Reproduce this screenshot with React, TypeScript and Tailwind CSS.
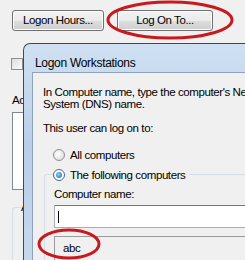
const btn =
  "h-[21px] rounded-[3px] border border-[#707070] bg-[linear-gradient(#f2f2f2_0%,#ebebeb_50%,#dddddd_51%,#cfcfcf_100%)] shadow-[inset_0_0_0_1px_#fcfcfc]";

export default function App() {
  return (
    <div className="relative w-[245px] h-[260px] overflow-hidden bg-[#f0f0f0] text-[11.5px] tracking-[-0.4px] text-black [font-family:'Liberation_Sans',Arial,sans-serif]">
      {/* window behind */}
      <div className="flex gap-[13px] pl-[12px] pt-[10px]">
        <button className={`${btn} w-[92px]`}>Logon Hours...</button>
        <button className={`${btn} w-[96px]`}>Log On To...</button>
      </div>

      <div className="ml-[11px] mt-[27px] w-[12px] h-[12px] border border-[#8f8f8f] bg-[linear-gradient(135deg,#dcdcdc,#fdfdfd)]" />

      <div className="ml-[12px] mt-[23px] leading-[14px]">Ac</div>
      <div className="ml-[12px] mt-[5px] w-[60px] h-[78px] border border-[#828790] bg-white" />
      <div className="ml-[12px] mt-[17px] w-[60px] h-[60px] rounded-tl-[3px] border-l border-t border-[#d5dfe5]">
        <div className="-mt-[7px] ml-[8px] w-fit bg-[#f0f0f0] leading-[12px]">A</div>
      </div>

      {/* dialog window */}
      <div className="absolute left-[23px] top-[43px] w-[240px] h-[230px] rounded-tl-[7px] border-l border-t border-[#3f4a58] bg-[linear-gradient(180deg,#cfe0f2,#b9cfe8_45%,#c6d9ee)] flex flex-col">
        <div className="h-[28px] shrink-0 flex items-center pl-[11px] pt-[10px] text-[12px] tracking-[-0.3px]">
          Logon Workstations
        </div>
        <div className="ml-[8px] flex-1 border-l border-t border-[#8ea4be] bg-[#f0f0f0] pl-[10px] pt-[13px] whitespace-nowrap leading-[12px]">
          <div>In Computer name, type the computer's Net</div>
          <div>System (DNS) name.</div>
          <div className="mt-[12px]">This user can log on to:</div>

          <div className="mt-[14px] ml-[10px] h-[13px] flex items-center gap-[5px]">
            <span className="w-[12px] h-[12px] rounded-full border border-[#8f8f8f] bg-[radial-gradient(circle_at_40%_40%,#ffffff,#d6d6d6)]" />
            <span>All computers</span>
          </div>

          <div className="mt-[7px] relative">
            <div className="absolute left-[1px] top-[6px] w-[240px] h-[100px] rounded-tl-[3px] border-l border-t border-[#d5dfe5]" />
            <div className="relative ml-[10px] h-[13px] flex items-center gap-[5px] bg-[#f0f0f0] w-fit pr-[4px]">
              <span className="w-[12px] h-[12px] rounded-full border border-[#3c6a99] bg-white flex items-center justify-center">
                <span className="w-[6px] h-[6px] rounded-full bg-[radial-gradient(circle_at_40%_40%,#8fd0f8,#1a5ea5)]" />
              </span>
              <span>The following computers</span>
            </div>
            <div className="relative ml-[11px] mt-[7px]">Computer name:</div>
            <div className="relative ml-[11px] mt-[5px] h-[23px] border border-[#abadb3] border-t-[#5c7da3] bg-white flex items-center pl-[3px]">
              <span className="w-px h-[12px] bg-black" />
            </div>
            <div className="relative ml-[11px] mt-[8px] h-[30px] border-l border-t border-[#9a9a9a] bg-[#f0f0f0] pl-[8px] pt-[5px]">
              abc
            </div>
          </div>
        </div>
      </div>

      {/* red annotation marks */}
      <svg className="absolute left-0 top-0 pointer-events-none" width="245" height="260">
        <ellipse cx="170" cy="20" rx="62" ry="18" fill="none" stroke="#c8191d" strokeWidth="3" />
        <ellipse cx="69" cy="244" rx="30" ry="14" fill="none" stroke="#c8191d" strokeWidth="3" />
      </svg>
    </div>
  );
}
